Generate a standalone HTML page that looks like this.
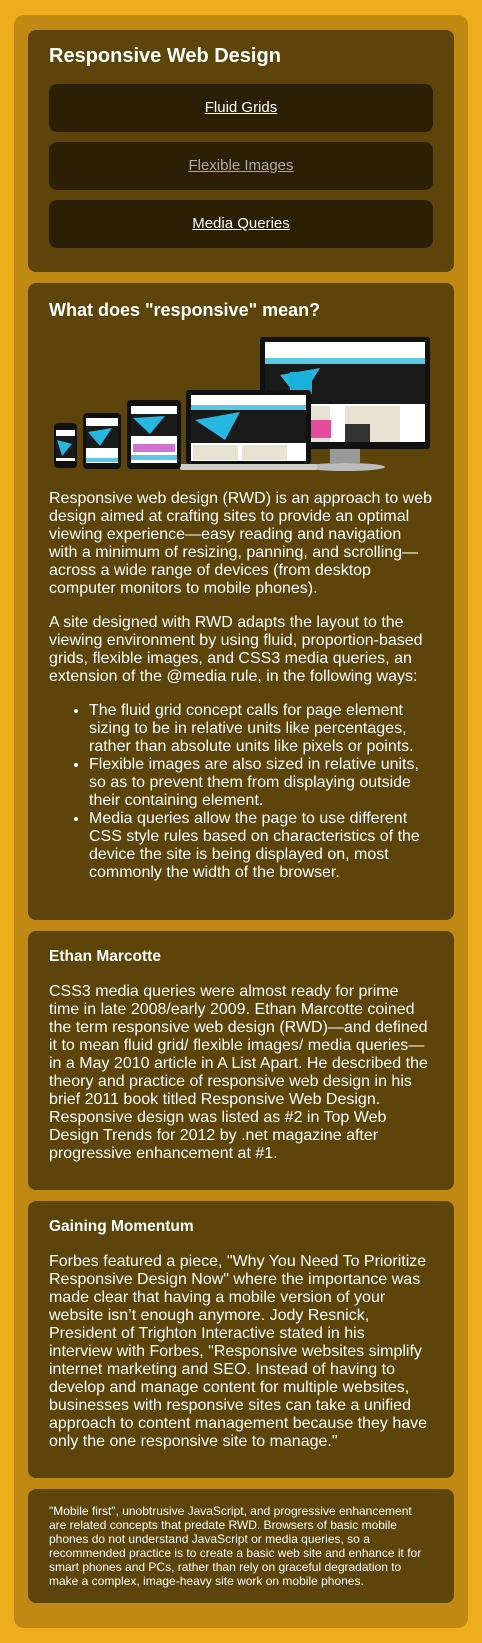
<!DOCTYPE html>
<html><head><meta charset="utf-8"><style>
*{box-sizing:border-box;margin:0;padding:0}
html,body{width:482px;height:1643px;background:#EDAE1E;overflow:hidden}
body{font-family:"Liberation Sans",Arial,sans-serif;color:#fff;position:relative}
.wrap{position:absolute;left:14px;top:15px;width:454px;height:1613px;background:#BF8914;border-radius:10px}
.p{position:absolute;left:28px;width:426px;background:#5C440A;border-radius:8px;padding:0 21px}
h1{font-size:20px;font-weight:bold;position:absolute;left:21px;top:44px;line-height:24px}
.btn{position:absolute;left:21px;width:384px;height:48px;background:#2B1F05;border-radius:8px;text-align:center;line-height:48px;font-size:15px}
.btn a{color:#fff;text-decoration:underline}
.btn a.v{color:#aaa}
h2{font-size:18px;font-weight:bold;line-height:22px}
h3{font-size:15.5px;font-weight:bold;line-height:18px}
p,li{font-size:16px;line-height:18px;white-space:nowrap}
ul{padding-left:40px;margin-top:16px}
.small{font-size:12px;line-height:14px}
</style></head><body>
<div class="wrap"></div>
<div class="p" style="top:30px;height:242px">
<h1 style="top:14px;left:21px">Responsive Web Design</h1>
<div class="btn" style="top:54px"><a href="#">Fluid Grids</a></div>
<div class="btn" style="top:112px"><a class="v" href="#">Flexible Images</a></div>
<div class="btn" style="top:170px"><a href="#">Media Queries</a></div>
</div>
<div class="p" style="top:283px;height:637px;padding-top:16px">
<h2>What does "responsive" mean?</h2>
<svg width="384" height="140" viewBox="49 335 384 140" style="display:block;margin-top:14px">
<rect x="330" y="445" width="30" height="18" fill="#999"/>
<ellipse cx="345" cy="467" rx="40" ry="4" fill="#bbb"/>
<rect x="260" y="337" width="170" height="112" rx="3" fill="#111"/>
<rect x="265" y="342" width="160" height="100" fill="#fff"/>
<rect x="265" y="358" width="160" height="6" fill="#5cc8e6"/>
<rect x="265" y="364" width="160" height="40" fill="#1a1a1a"/>
<path d="M280 375 L320 368 L300 400 Z" fill="#26b6e0"/>
<rect x="290" y="372" width="22" height="22" fill="#1ab0dc"/>
<rect x="280" y="406" width="50" height="36" fill="#e8e2d2"/>
<rect x="296" y="420" width="35" height="18" fill="#e54c9c"/>
<rect x="345" y="406" width="55" height="36" fill="#e8e2d2"/>
<rect x="345" y="424" width="25" height="18" fill="#333"/>
<rect x="186" y="390" width="125" height="74" rx="3" fill="#111"/>
<rect x="191" y="395" width="115" height="66" fill="#fff"/>
<rect x="191" y="405" width="115" height="5" fill="#5cc8e6"/>
<rect x="191" y="410" width="115" height="33" fill="#1a1a1a"/>
<path d="M195 420 L240 412 L225 440 Z" fill="#26b6e0"/>
<rect x="193" y="445" width="45" height="15" fill="#e8e2d2"/>
<rect x="242" y="445" width="45" height="15" fill="#e8e2d2"/>
<rect x="180" y="464" width="137" height="6" rx="2" fill="#ccc"/>
<rect x="127" y="400" width="54" height="69" rx="4" fill="#111"/>
<rect x="131" y="406" width="46" height="57" fill="#fff"/>
<rect x="131" y="414" width="46" height="22" fill="#1a1a1a"/>
<path d="M133 418 L165 416 L150 434 Z" fill="#26b6e0"/>
<rect x="133" y="444" width="42" height="8" fill="#d070d0"/>
<rect x="131" y="455" width="46" height="5" fill="#5cc8e6"/>
<rect x="83" y="413" width="38" height="56" rx="4" fill="#111"/>
<rect x="86" y="418" width="32" height="45" fill="#fff"/>
<rect x="86" y="426" width="32" height="22" fill="#1a1a1a"/>
<path d="M88 432 L112 428 L100 446 Z" fill="#26b6e0"/>
<rect x="86" y="458" width="32" height="4" fill="#5cc8e6"/>
<rect x="54" y="423" width="23" height="45" rx="4" fill="#111"/>
<rect x="56" y="430" width="19" height="31" fill="#fff"/>
<rect x="56" y="436" width="19" height="22" fill="#1a1a1a"/>
<path d="M57 440 L72 444 L62 456 Z" fill="#26b6e0"/>
</svg>
<p style="margin-top:15px">Responsive web design (RWD) is an approach to web<br>design aimed at crafting sites to provide an optimal<br>viewing experience—easy reading and navigation<br>with a minimum of resizing, panning, and scrolling—<br>across a wide range of devices (from desktop<br>computer monitors to mobile phones).</p>
<p style="margin-top:16px">A site designed with RWD adapts the layout to the<br>viewing environment by using fluid, proportion-based<br>grids, flexible images, and CSS3 media queries, an<br>extension of the @media rule, in the following ways:</p>
<ul>
<li>The fluid grid concept calls for page element<br>sizing to be in relative units like percentages,<br>rather than absolute units like pixels or points.</li>
<li>Flexible images are also sized in relative units,<br>so as to prevent them from displaying outside<br>their containing element.</li>
<li>Media queries allow the page to use different<br>CSS style rules based on characteristics of the<br>device the site is being displayed on, most<br>commonly the width of the browser.</li>
</ul>
</div>
<div class="p" style="top:931px;height:259px;padding-top:17px">
<h3>Ethan Marcotte</h3>
<p style="margin-top:17px">CSS3 media queries were almost ready for prime<br>time in late 2008/early 2009. Ethan Marcotte coined<br>the term responsive web design (RWD)—and defined<br>it to mean fluid grid/ flexible images/ media queries—<br>in a May 2010 article in A List Apart. He described the<br>theory and practice of responsive web design in his<br>brief 2011 book titled Responsive Web Design.<br>Responsive design was listed as #2 in Top Web<br>Design Trends for 2012 by .net magazine after<br>progressive enhancement at #1.</p>
</div>
<div class="p" style="top:1201px;height:277px;padding-top:17px">
<h3>Gaining Momentum</h3>
<p style="margin-top:17px">Forbes featured a piece, "Why You Need To Prioritize<br>Responsive Design Now" where the importance was<br>made clear that having a mobile version of your<br>website isn’t enough anymore. Jody Resnick,<br>President of Trighton Interactive stated in his<br>interview with Forbes, "Responsive websites simplify<br>internet marketing and SEO. Instead of having to<br>develop and manage content for multiple websites,<br>businesses with responsive sites can take a unified<br>approach to content management because they have<br>only the one responsive site to manage."</p>
</div>
<div class="p" style="top:1489px;height:114px;padding-top:15px">
<p class="small">"Mobile first", unobtrusive JavaScript, and progressive enhancement<br>are related concepts that predate RWD. Browsers of basic mobile<br>phones do not understand JavaScript or media queries, so a<br>recommended practice is to create a basic web site and enhance it for<br>smart phones and PCs, rather than rely on graceful degradation to<br>make a complex, image-heavy site work on mobile phones.</p>
</div>
</body></html>
